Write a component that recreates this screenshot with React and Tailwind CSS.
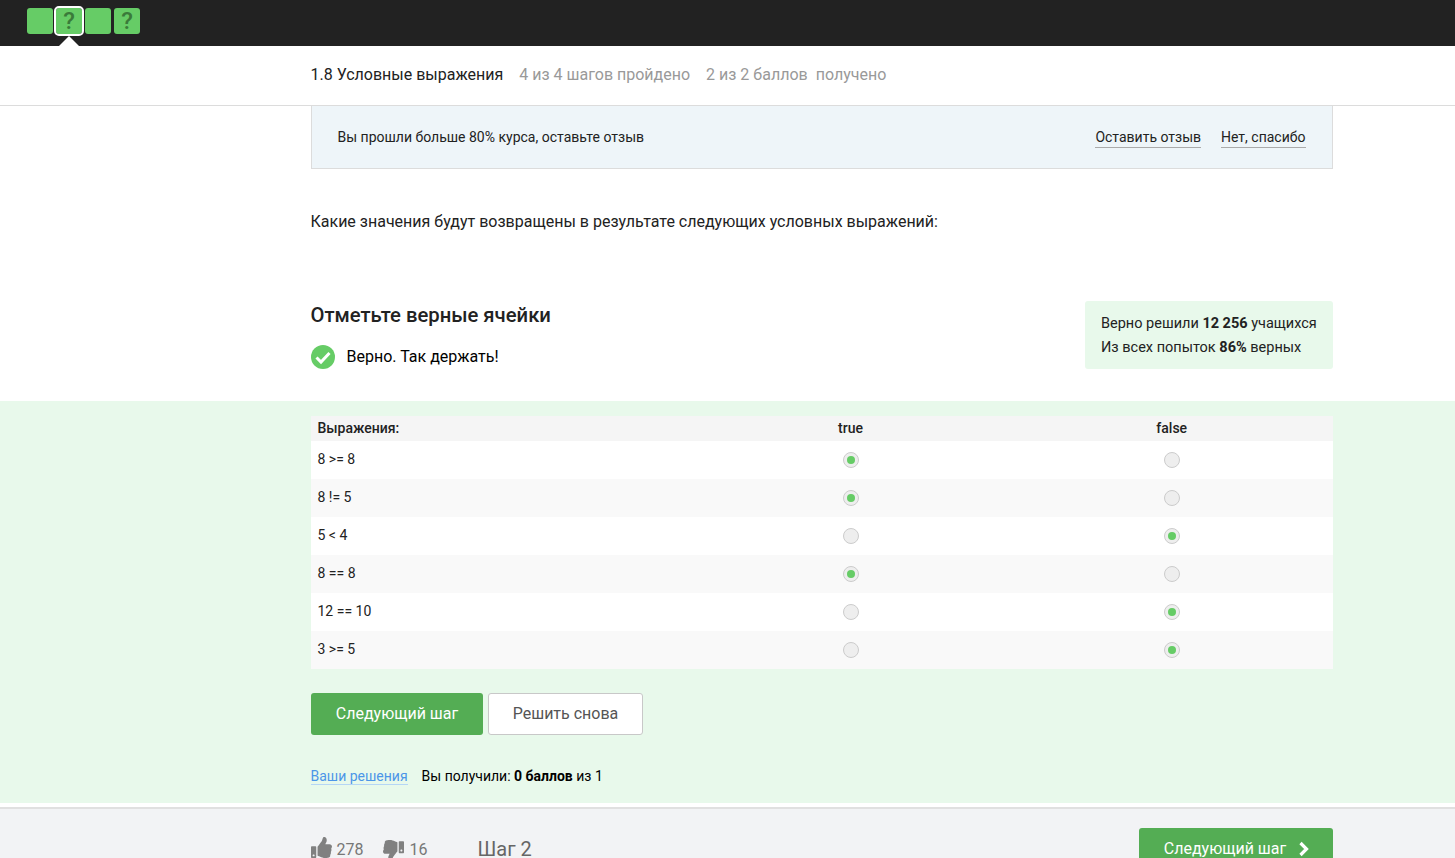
import React from 'react';
import { FaThumbsUp, FaThumbsDown } from 'react-icons/fa';

const rows = [
  { label: '8 >= 8', pick: 'true' },
  { label: '8 != 5', pick: 'true' },
  { label: '5 < 4', pick: 'false' },
  { label: '8 == 8', pick: 'true' },
  { label: '12 == 10', pick: 'false' },
  { label: '3 >= 5', pick: 'false' },
];

const Radio = ({ on }) => (
  <span className="flex h-4 w-4 items-center justify-center rounded-full border-[1.5px] border-[#cccccc] bg-[#eeeeee]">
    {on && <span className="h-2 w-2 rounded-full bg-[#66cc66]" />}
  </span>
);

const Step = ({ mark, active }) => (
  <div className={`relative flex h-[26px] w-[26px] items-center justify-center rounded-[3px] bg-[#66cc66] text-[24px] font-medium text-[#3a7a3a] ${active ? 'outline-2 outline-white' : ''}`}>
    {mark && '?'}
    {active && <span className="absolute left-[3px] top-[28px] h-0 w-0 border-x-[10px] border-b-[10px] border-x-transparent border-b-white" />}
  </div>
);

const App = () => {
  return (
    <div className="h-screen overflow-hidden bg-white font-['Roboto',sans-serif] text-[#222]">
      {/* Top steps bar */}
      <div className="flex h-[46px] items-start gap-[3px] bg-[#222] pl-[27px] pt-[8px]">
        <Step />
        <Step mark active />
        <Step />
        <Step mark />
      </div>

      {/* Lesson header */}
      <div className="flex h-[60px] items-center border-b border-[#dcdcdc] pb-[2px] pl-[310.5px] text-base text-[#999]">
        <span className="text-[#222]">1.8 Условные выражения</span>
        <span className="ml-4">4 из 4 шагов пройдено</span>
        <span className="ml-4">2 из 2 баллов</span>
        <span className="ml-2">получено</span>
      </div>

      <div className="ml-[310.5px] w-[1022px]">
        {/* Feedback banner */}
        <div className="flex h-[63px] items-center justify-between border border-t-0 border-[#dcdcdc] bg-[#eef5f9] pl-[26px] pr-[26px] text-sm">
          <span>Вы прошли больше 80% курса, оставьте отзыв</span>
          <div className="flex gap-5">
            <span className="border-b border-[#aaa]">Оставить отзыв</span>
            <span className="border-b border-[#aaa]">Нет, спасибо</span>
          </div>
        </div>

        <p className="mt-[41px] text-base leading-6">Какие значения будут возвращены в результате следующих условных выражений:</p>

        {/* Quiz heading */}
        <div className="mt-[67px] flex h-[100px] items-start justify-between">
          <div>
            <h2 className="text-[20.25px] font-medium leading-7">Отметьте верные ячейки</h2>
            <div className="mt-[15px] flex items-center gap-3 text-base text-black">
              <svg width="24" height="24" viewBox="0 0 24 24">
                <circle cx="12" cy="12" r="12" fill="#66cc66" />
                <path d="M5.500 12.500l4.500 4.500 8.500-9" fill="none" stroke="#fff" strokeWidth="3" />
              </svg>
              <span className="pt-[1px]">Верно. Так держать!</span>
            </div>
          </div>
          <div className="h-[68px] w-[248px] whitespace-nowrap rounded-[3px] bg-[#e8f9eb] pl-[16.5px] pt-[11px] text-[14.5px] leading-6">
            <div>Верно решили <b className="font-bold">12 256</b> учащихся</div>
            <div>Из всех попыток <b className="font-bold">86%</b> верных</div>
          </div>
        </div>
      </div>

      {/* Green answer zone */}
      <div className="h-[402px] bg-[#e8f9eb] pl-[310.5px] pt-[15px]">
        <div className="w-[1022px] text-sm">
          <div className="grid h-[25px] grid-cols-[379.5px_321px_321.5px] items-center bg-[#f5f5f5] pb-[2px] font-medium">
            <span className="pl-[7px]">Выражения:</span>
            <span className="text-center">true</span>
            <span className="text-center">false</span>
          </div>
          {rows.map((row, i) => (
            <div key={row.label} className={`grid h-[38px] grid-cols-[379.5px_321px_321.5px] items-center ${i % 2 ? 'bg-[#f9f9f9]' : 'bg-white'}`}>
              <span className="-mt-[3px] pl-[7px]">{row.label}</span>
              <span className="flex justify-center"><Radio on={row.pick === 'true'} /></span>
              <span className="flex justify-center"><Radio on={row.pick === 'false'} /></span>
            </div>
          ))}
        </div>

        <div className="mt-6 flex gap-[5px] text-base">
          <button className="h-[42px] w-[172px] rounded-[3px] bg-[#54ad54] pl-[1px] text-white">Следующий шаг</button>
          <button className="h-[42px] w-[155px] rounded-[3px] border border-[#c8c8c8] bg-white pl-[1px] text-[#555]">Решить снова</button>
        </div>

        <div className="mt-[33px] flex items-start gap-[14px] text-sm leading-[16px] text-black">
          <span className="border-b border-[#b5d6f5] text-[#4c96e8]">Ваши решения</span>
          <span>Вы получили: <b className="font-bold">0 баллов</b> из 1</span>
        </div>
      </div>

      {/* Bottom step nav */}
      <div className="mt-[4px] flex h-[60px] items-start justify-between border-t-2 border-[#e0e0e0] bg-[#f2f3f5] pl-[310.5px] pr-[122px] pt-[19px]">
        <div className="flex items-start text-[#777]">
          <FaThumbsUp size={21} color="#808080" className="mt-[9px]" />
          <span className="ml-[5px] mt-[14px] text-base leading-[16px]">278</span>
          <FaThumbsDown size={21} color="#808080" className="ml-[20px] mt-[12px] -scale-x-100" />
          <span className="ml-[5px] mt-[14px] text-base leading-[16px]">16</span>
          <span className="ml-[50px] mt-[12px] text-xl leading-[18px] text-[#666]">Шаг 2</span>
        </div>
        <button className="flex h-[42px] w-[194px] items-center justify-center gap-3 rounded-[3px] bg-[#54ad54] pl-[2px] text-base text-white">
          Следующий шаг
          <svg width="12" height="16" viewBox="0 0 12 16" fill="none" stroke="#fff" strokeWidth="3.200">
            <path d="M2.500 2l6 6-6 6" />
          </svg>
        </button>
      </div>
    </div>
  );
};

export default App;
